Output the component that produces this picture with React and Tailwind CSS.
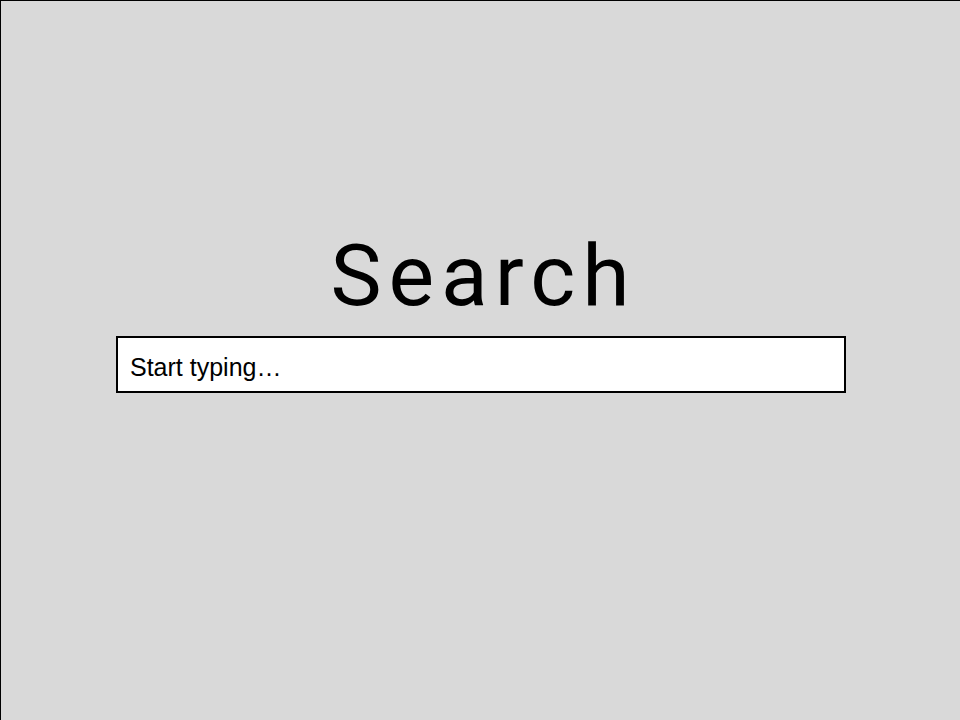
import React, { useState } from "react";

export default function App() {
  const [query, setQuery] = useState("");

  return (
    <div className="w-[960px] h-[720px] bg-[#d9d9d9] border-t border-l border-black overflow-hidden flex flex-col items-center pt-[225px]">
      <h1 className="font-['Roboto',sans-serif] text-[86px] leading-[100px] tracking-[7px] text-black font-normal ml-[6px]">
        Search
      </h1>
      <input
        type="text"
        value={query}
        onChange={(e) => setQuery(e.target.value)}
        placeholder="Start typing…"
        className="mt-[10px] ml-[1px] w-[730px] h-[57px] bg-white border-2 border-black px-[12px] pt-[6px] font-['Liberation_Sans',Arial,sans-serif] text-[25px] text-black placeholder:text-black outline-none"
      />
    </div>
  );
}
